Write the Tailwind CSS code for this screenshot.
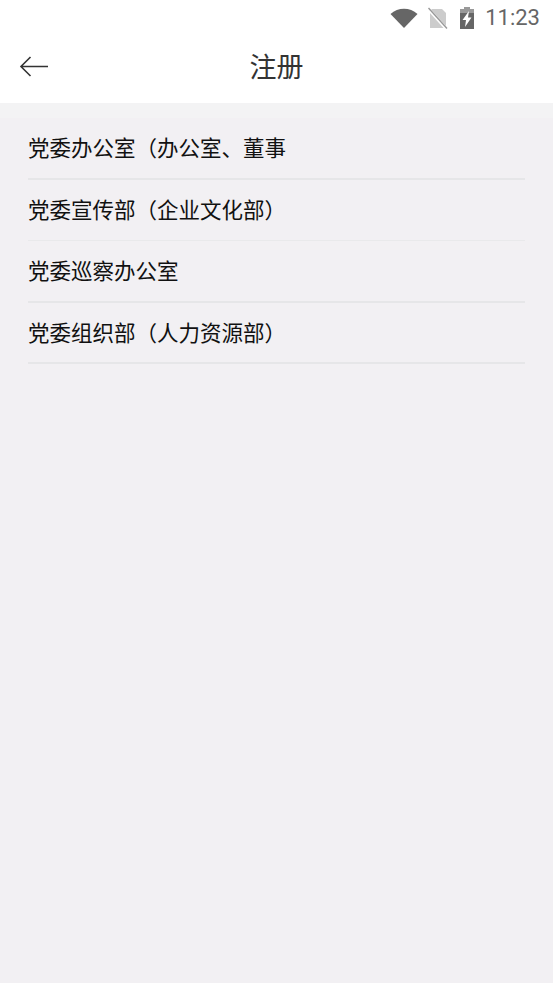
<!DOCTYPE html>
<html lang="zh-CN">
<head>
<meta charset="utf-8">
<script src="https://cdn.jsdelivr.net/npm/@tailwindcss/browser@4"></script>
</head>
<body class="m-0 w-[553px] h-[983px] overflow-hidden bg-[#f2f0f3] font-['Noto_Sans_CJK_SC',sans-serif]">
  <div class="bg-white">
    <div class="h-[36px] flex items-center justify-end pr-[13px] text-[#666]">
      <svg class="w-[28px] h-[22px] mr-[9px]" viewBox="0 0 28 22"><path d="M0.5 7 C8 0 20 0 27.5 7 L14 21 Z" fill="#666"/></svg>
      <svg class="w-[22px] h-[24px] mr-[10px]" viewBox="0 0 22 24"><path d="M5 3 H15 L19 7 V22 H3 V5 Z" fill="#ccc"/><path d="M0.5 2 L20.5 24" stroke="#fff" stroke-width="3.2"/><path d="M1.5 2 L20 22.5" stroke="#999" stroke-width="1.4"/></svg>
      <svg class="w-[16px] h-[24px] mr-[10px]" viewBox="0 0 16 24"><path d="M5 1 H11 V3 H15 V7 H1 V3 H5 Z" fill="#999"/><path d="M1 7 H15 V23 H1 Z" fill="#666"/><path d="M10 5 L3.5 14 H7 L6 21 L12.5 11.5 H9 Z" fill="#fff"/></svg>
      <span class="font-['Roboto',sans-serif] text-[22px] leading-none text-[#666]">11:23</span>
    </div>
    <div class="h-[67px] relative flex items-center justify-center">
      <svg class="absolute left-[19px] top-[19px] w-[30px] h-[22px]" viewBox="0 0 30 22"><path d="M29 11.5 H2 M11.5 2 L2 11.5 L11.5 21" fill="none" stroke="#333" stroke-width="1.6"/></svg>
      <span class="text-[27px] leading-none text-[#333] -mt-[9px]">注册</span>
    </div>
  </div>
  <div class="h-[15px] bg-[#f3f3f4]"></div>
  <ul class="px-[28px] text-[21.5px] text-[#111]">
    <li class="h-[61.5px] flex items-center border-b-2 border-[#e6e6e8] pb-[1px]">党委办公室（办公室、董事</li>
    <li class="h-[61px] flex items-center border-b border-[#e9e9eb]">党委宣传部（企业文化部）</li>
    <li class="h-[62px] flex items-center border-b-2 border-[#e6e6e8]">党委巡察办公室</li>
    <li class="h-[61.5px] flex items-center border-b-2 border-[#e6e6e8]">党委组织部（人力资源部）</li>
  </ul>
</body>
</html>
